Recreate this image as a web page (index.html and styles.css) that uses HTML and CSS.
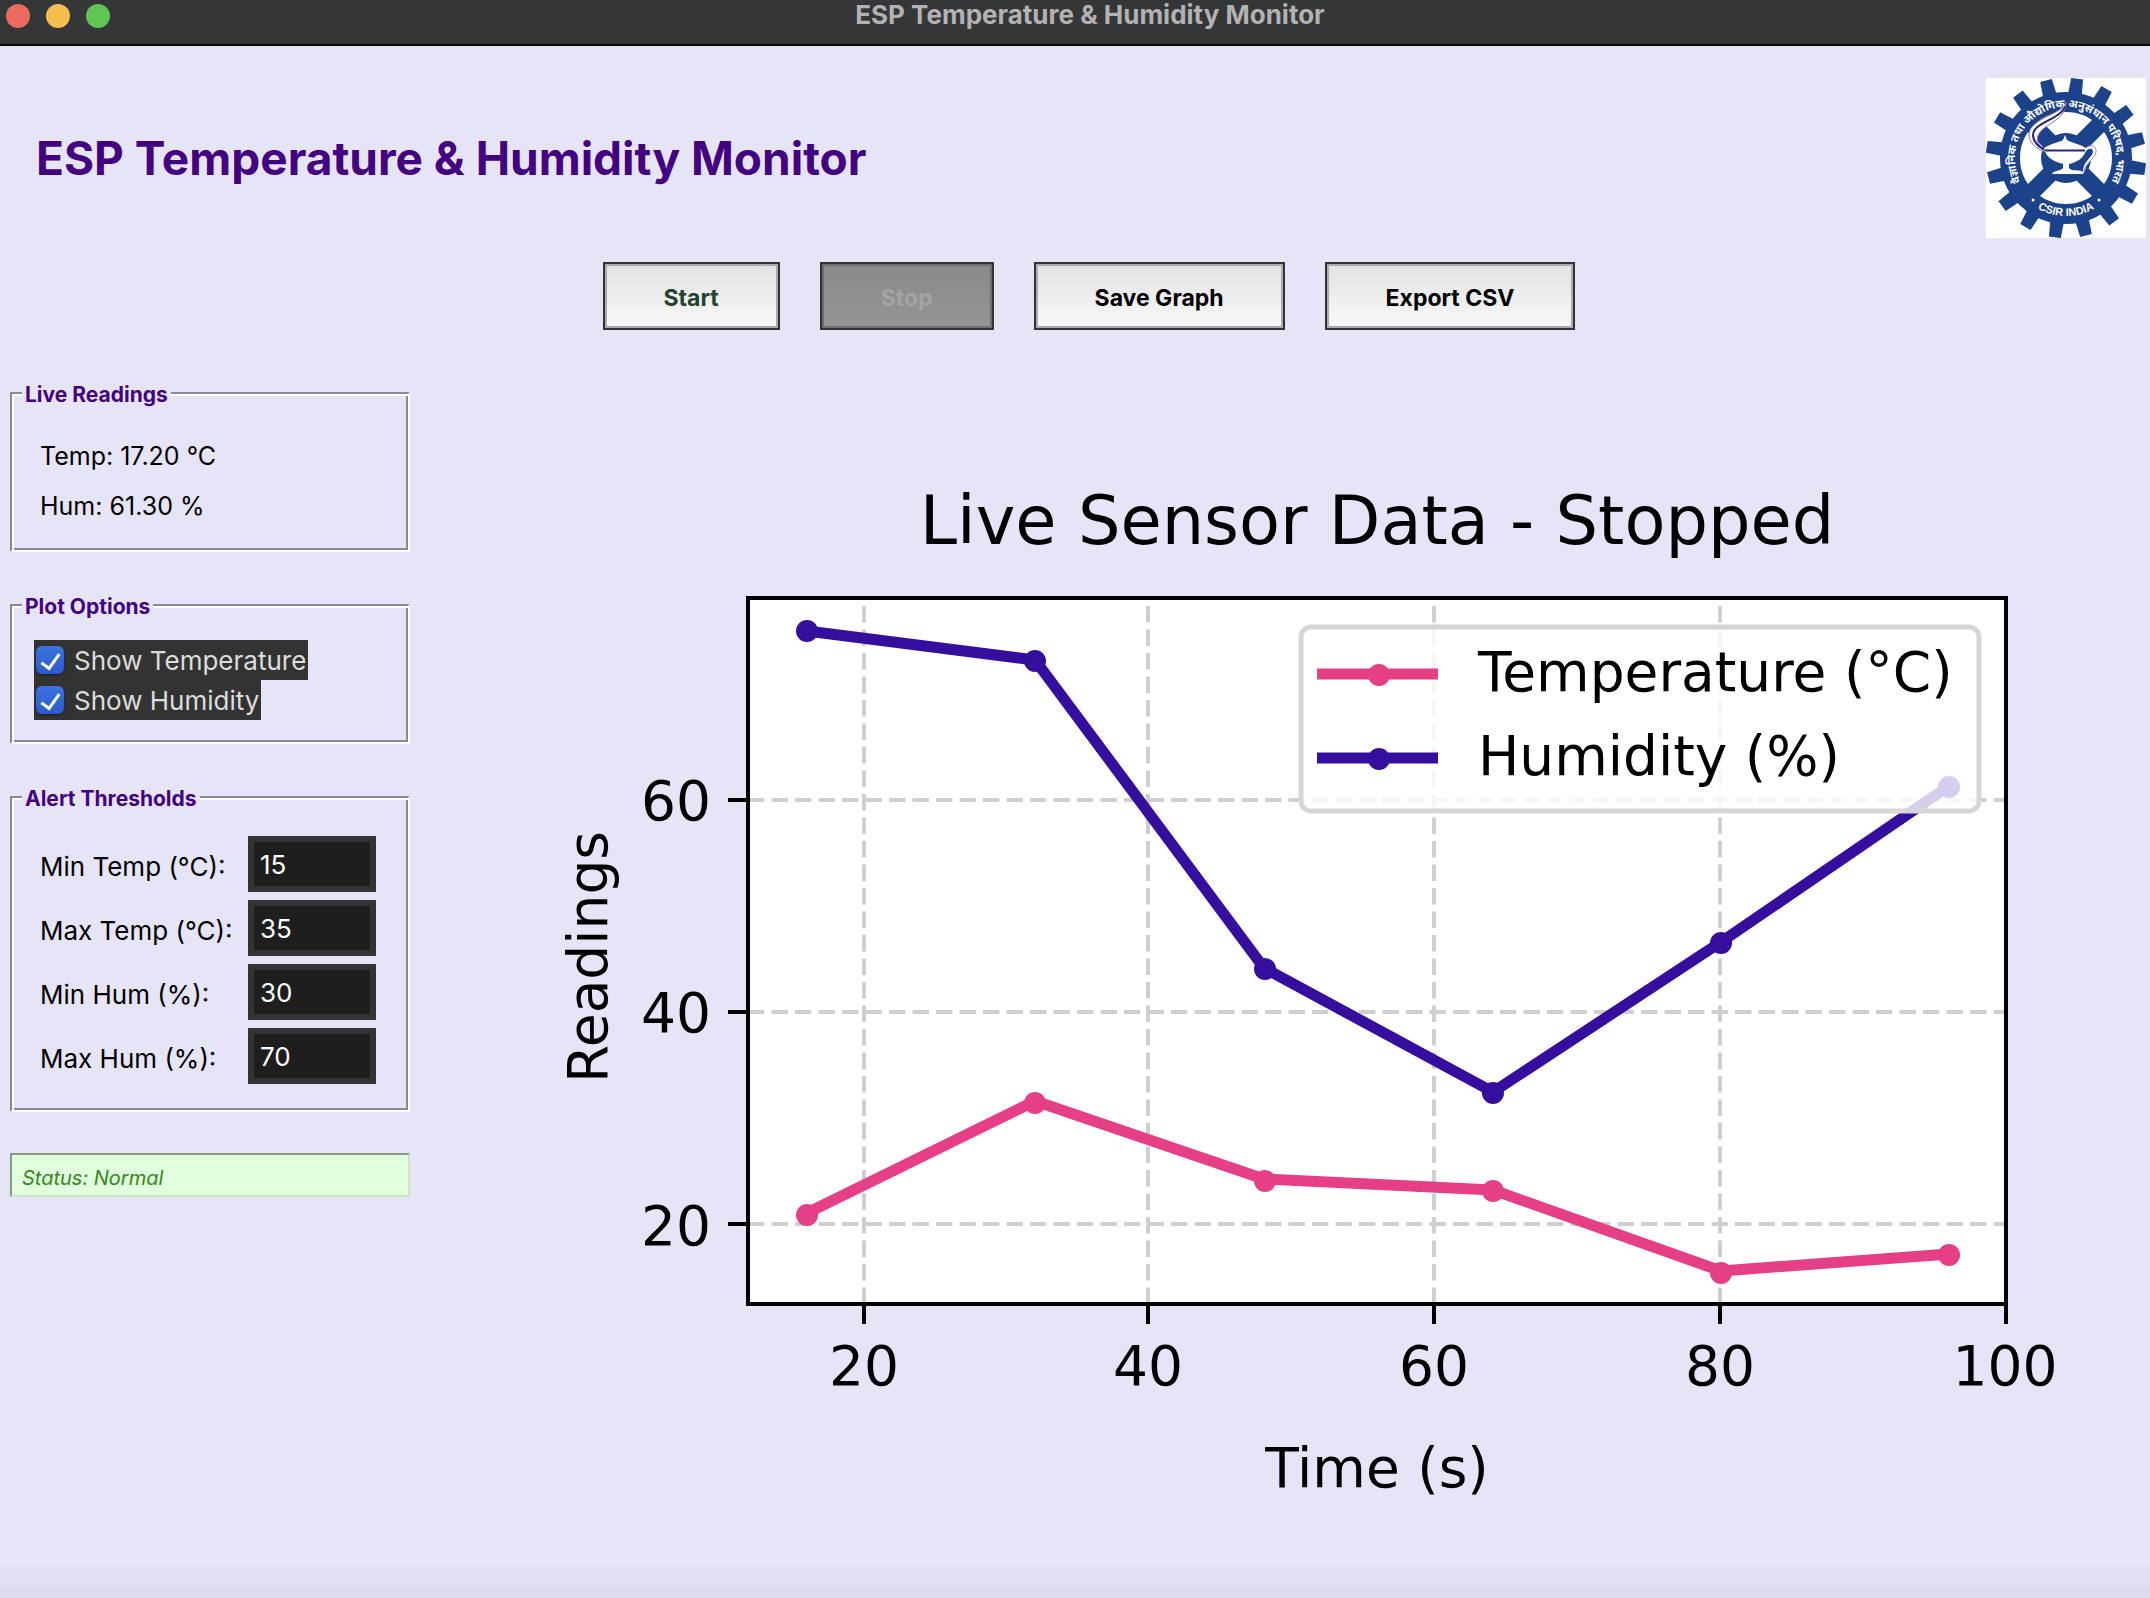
FILE: index.html
```html
<!DOCTYPE html>
<html lang="en">
<head>
<meta charset="utf-8">
<title>ESP Temperature &amp; Humidity Monitor</title>
<link rel="stylesheet" href="styles.css">
</head>
<body>
<div class="titlebar">
  <div class="lights"><span class="light close"></span><span class="light minimize"></span><span class="light expand"></span></div>
  <div class="window-title">ESP Temperature &amp; Humidity Monitor</div>
</div>
<header class="header">
  <h1>ESP Temperature &amp; Humidity Monitor</h1>
  <svg class="logo" viewBox="0 0 160 160" role="img" aria-label="CSIR India">
    <defs>
      <path id="arc-top" d="M42.500 114.700 A51 51 0 1 1 117.500 114.700"/>
      <path id="arc-bottom" d="M22 80 A58 58 0 0 0 138 80"/>
      <g id="teeth">
        <path d="M73 18 L74 0 H86 L87 18 Z"/>
        <path d="M73 18 L74 0 H86 L87 18 Z" transform="rotate(90 80 80)"/>
        <path d="M73 18 L74 0 H86 L87 18 Z" transform="rotate(180 80 80)"/>
        <path d="M73 18 L74 0 H86 L87 18 Z" transform="rotate(270 80 80)"/>
      </g>
    </defs>
    <rect width="160" height="160" fill="#fff"/>
    <g fill="#1c4289">
      <use href="#teeth" transform="rotate(8 80 80)"/>
      <use href="#teeth" transform="rotate(30.500 80 80)"/>
      <use href="#teeth" transform="rotate(53 80 80)"/>
      <use href="#teeth" transform="rotate(75.500 80 80)"/>
    </g>
    <circle cx="80" cy="80" r="56" fill="none" stroke="#1c4289" stroke-width="20"/>
    <path d="M46 114 L114 46 M46 46 L114 114" stroke="#1c4289" stroke-width="17"/>
    <circle cx="80" cy="80" r="25" fill="#1c4289"/>
    <path d="M80 24 C78 36 44 40 43 56 C43 65 50 71 60 74 C50 66 49 60 55 53 C62 45 80 41 80 24 Z" fill="#fff" stroke="#8b78b8" stroke-width="1"/>
    <path d="M79 28 C75 42 46 44 47 58 C48 65 53 69 59 72" fill="none" stroke="#2a2476" stroke-width="2"/>
    <path d="M58 70 C66 65 74 64 77 62 L79 57 L81 62 C86 65 94 66 100 70 C104 66 111 67 110 74 C109 81 101 83 99 92 L97 96 H66 C68 92 75 93 77 90 V86 C66 83 60 79 58 70 Z" fill="#fff"/>
    <path d="M83 86 V90 C86 94 95 91 97 94 C97 83 106 80 107 74 C107 70 103 70 100 73 C97 80 92 84 83 86 Z" fill="#1c4289"/>
    <path d="M59 72.500 H99" stroke="#292b7a" stroke-width="2"/>
    <path d="M100 70 C104 66 111 67 110 74 C109 81 101 83 98 93" fill="none" stroke="#9c8ac4" stroke-width="1"/>
    <text class="logo-hindi"><textPath href="#arc-top" startOffset="50%">वैज्ञानिक तथा औद्योगिक अनुसंधान परिषद, भारत</textPath></text>
    <text class="logo-name"><textPath href="#arc-bottom" startOffset="50%">CSIR INDIA</textPath></text>
    <circle cx="47" cy="122" r="1.500" fill="#fff"/>
    <circle cx="113" cy="122" r="1.500" fill="#fff"/>
  </svg>
</header>
<div class="toolbar">
  <button class="button start" type="button">Start</button>
  <button class="button" type="button" disabled>Stop</button>
  <button class="button" type="button">Save Graph</button>
  <button class="button" type="button">Export CSV</button>
</div>
<main class="main">
  <aside class="sidebar">
    <fieldset class="panel">
      <legend>Live Readings</legend>
      <div class="readings"><p>Temp: 17.20 °C</p><p>Hum: 61.30 %</p></div>
    </fieldset>
    <fieldset class="panel">
      <legend>Plot Options</legend>
      <div class="options">
        <label class="check"><input type="checkbox" checked>Show Temperature</label>
        <label class="check"><input type="checkbox" checked>Show Humidity</label>
      </div>
    </fieldset>
    <fieldset class="panel">
      <legend>Alert Thresholds</legend>
      <div class="thresholds">
        <label for="min-temp">Min Temp (°C):</label><input id="min-temp" type="text" value="15">
        <label for="max-temp">Max Temp (°C):</label><input id="max-temp" type="text" value="35">
        <label for="min-hum">Min Hum (%):</label><input id="min-hum" type="text" value="30">
        <label for="max-hum">Max Hum (%):</label><input id="max-hum" type="text" value="70">
      </div>
    </fieldset>
    <div class="status">Status: Normal</div>
  </aside>
  <svg class="chart" viewBox="410 381 1740 1209" role="img" aria-label="Live sensor data">
    <text class="chart-title" x="1377" y="544">Live Sensor Data - Stopped</text>
    <rect x="748" y="598" width="1258" height="706" fill="#fff"/>
    <g class="grid">
      <path d="M864 1304V598M1148 1304V598M1434 1304V598M1720 1304V598"/>
      <path d="M748 800H2006M748 1012H2006M748 1224H2006"/>
    </g>
    <g class="temperature">
      <polyline points="807,1213 1035,1101 1264,1179 1493,1190 1721,1271 1949,1254"/>
      <circle cx="807" cy="1215" r="11"/><circle cx="1035" cy="1103" r="11"/><circle cx="1265" cy="1181" r="11"/><circle cx="1493" cy="1191" r="11"/><circle cx="1721" cy="1273" r="11"/><circle cx="1949" cy="1255" r="11"/>
    </g>
    <g class="humidity">
      <polyline points="807,631 1035,660 1264,968 1493,1092 1721,942 1949,786"/>
      <circle cx="807" cy="631" r="11"/><circle cx="1035" cy="661" r="11"/><circle cx="1265" cy="969" r="11"/><circle cx="1493" cy="1093" r="11"/><circle cx="1721" cy="943" r="11"/><circle cx="1949" cy="787" r="11"/>
    </g>
    <rect class="axes" x="748" y="598" width="1258" height="706"/>
    <path class="axes" d="M864 1304v20M1148 1304v20M1434 1304v20M1720 1304v20M2006 1304v20M748 800h-20M748 1012h-20M748 1224h-20"/>
    <g class="axis-text">
      <text x="864" y="1385">20</text><text x="1148" y="1385">40</text><text x="1434" y="1385">60</text><text x="1720" y="1385">80</text><text x="2005" y="1385">100</text>
      <text x="1377" y="1487">Time (s)</text>
      <text transform="translate(607 957) rotate(-90)">Readings</text>
    </g>
    <g class="axis-text y-ticks">
      <text x="711" y="820">60</text><text x="711" y="1032">40</text><text x="711" y="1245">20</text>
    </g>
    <rect class="legend-box" x="1301" y="627" width="678" height="184" rx="10"/>
    <g class="temperature"><path d="M1317 674h121"/><circle cx="1379" cy="675" r="11"/></g>
    <g class="humidity"><path d="M1317 758h121"/><circle cx="1379" cy="759" r="11"/></g>
    <g class="legend-text"><text x="1478" y="691">Temperature (°C)</text><text x="1478" y="775">Humidity (%)</text></g>
  </svg>
</main>
</body>
</html>
```
FILE: styles.css
```css
* { box-sizing: border-box; }
body {
  margin: 0;
  min-height: 100vh;
  background: linear-gradient(to top, #dcdaec, #e6e5f8 36px);
  color: #000;
  font-family: Inter, "Liberation Sans", sans-serif;
  font-size: 25px;
}
.titlebar {
  display: grid;
  grid-template-columns: 1fr auto 1fr;
  align-items: start;
  height: 46px;
  padding: 0 0 0 30px;
  border-bottom: 2px solid #08080a;
  background: #353638;
}
.lights { display: flex; gap: 16px; margin-left: -24px; padding-top: 4px; }
.light { width: 24px; height: 24px; border-radius: 50%; }
.close { background: #ed6a5e; }
.minimize { background: #f5bf4f; }
.expand { background: #61c554; }
.window-title { color: #b2b2b2; font-size: 26px; font-weight: 700; line-height: 30px; }
.header {
  display: flex;
  justify-content: space-between;
  align-items: center;
  padding: 32px 4px 0 36px;
}
h1 { margin: 0; color: #430080; font-size: 46px; font-weight: 700; }
.logo { width: 160px; height: 160px; }
.logo-hindi, .logo-name { fill: #fff; font-weight: 700; text-anchor: middle; }
.logo-hindi { font-family: "Noto Sans Devanagari", "Noto Sans", sans-serif; font-size: 11px; }
.logo-name { font-family: "Liberation Sans", sans-serif; font-size: 11px; }
.toolbar { display: flex; justify-content: center; gap: 40px; padding: 24px 0 0 28px; }
.button {
  height: 68px;
  padding: 4px 59px 0;
  border: 2px solid #333;
  background: linear-gradient(#e2e2e2, #f8f8f8);
  box-shadow: inset 0 0 0 2px #acacac;
  color: #000;
  font: 700 23px Inter, "Liberation Sans", sans-serif;
}
.start { color: #21432f; }
.button:disabled { background: linear-gradient(#8a8a8a, #949494); box-shadow: inset 0 0 0 2px #6e6e6e; color: #a3a3a3; }
.main { display: grid; grid-template-columns: 400px 1fr; align-items: start; padding: 51px 0 8px 10px; }
.sidebar { display: flex; flex-direction: column; gap: 41px; }
.panel {
  min-width: 0;
  margin: 0;
  padding: 0 10px;
  border: 2px solid;
  border-color: #8a8a96 #fff #fff #8a8a96;
  box-shadow: inset 2px 2px 0 #fff, inset -2px -2px 0 #8a8a96;
}
.panel legend {
  padding: 4px 3px 0;
  background: #e6e5f8;
  color: #430080;
  font-size: 21px;
  font-weight: 700;
  line-height: 20px;
}
.readings { padding: 26px 18px 19px; }
.readings p { margin: 0; line-height: 50px; }
.options { display: flex; flex-direction: column; align-items: flex-start; padding: 23px 12px 22px; }
.check {
  display: flex;
  align-items: center;
  gap: 10px;
  height: 40px;
  padding: 0 2px;
  background: #333;
  color: #ddd;
  font-size: 26px;
}
.check input {
  appearance: none;
  width: 28px;
  height: 28px;
  margin: 0;
  border-radius: 6px;
  background: linear-gradient(#3b73e0, #2a5bc9);
  box-shadow: 0 1px 2px #1c1c1c;
}
.check input:checked::before {
  content: "";
  display: block;
  width: 8px;
  height: 16px;
  margin: 4px 0 0 9px;
  border: solid #fff;
  border-width: 0 3px 3px 0;
  transform: rotate(36deg);
}
.thresholds {
  display: grid;
  grid-template-columns: 208px 128px;
  gap: 8px 0;
  align-items: center;
  padding: 27px 18px 26px;
  font-size: 26px;
}
.thresholds label { padding-top: 4px; }
.thresholds input {
  width: 100%;
  height: 56px;
  padding: 0 6px;
  border: 6px solid #333;
  border-radius: 0;
  background: #1e1e1e;
  color: #fff;
  font: 26px Inter, "Liberation Sans", sans-serif;
}
.status {
  height: 44px;
  padding: 4px 10px 0;
  border: 2px solid;
  border-color: #8b9a86 #cce5c8 #cce5c8 #8b9a86;
  background: #e0ffdd;
  color: #38851f;
  font-size: 20px;
  font-style: italic;
  line-height: 38px;
}
.chart { display: block; width: 100%; height: auto; font-family: "DejaVu Sans", sans-serif; }
.chart-title { font-size: 67px; text-anchor: middle; }
.axis-text { font-size: 55px; text-anchor: middle; }
.y-ticks { text-anchor: end; }
.legend-text { font-size: 55px; }
.grid { fill: none; stroke: #cfcfcf; stroke-width: 4px; stroke-dasharray: 16.400 7.100; }
.axes { fill: none; stroke: #000; stroke-width: 4px; }
.temperature { fill: #e53f85; }
.humidity { fill: #360e9e; }
.temperature polyline, .temperature path { fill: none; stroke: #e53f85; stroke-width: 11px; stroke-linejoin: round; }
.humidity polyline, .humidity path { fill: none; stroke: #360e9e; stroke-width: 11px; stroke-linejoin: round; }
.legend-box { fill: #fff; fill-opacity: .8; stroke: #d6d6d6; stroke-width: 5px; }
```
